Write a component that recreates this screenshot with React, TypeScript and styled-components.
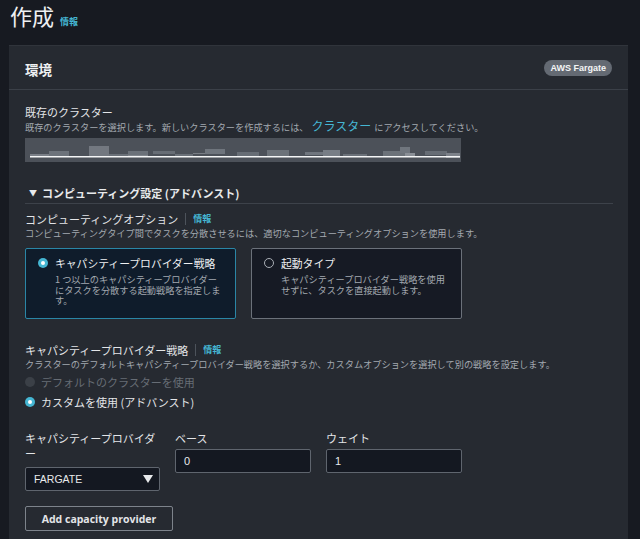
import React from "react";
import styled, { createGlobalStyle } from "styled-components";

const Global = createGlobalStyle`
  html, body { margin: 0; padding: 0; background: #171a21; }
  body {
    font-family: "Noto Sans CJK JP", "Noto Sans", "Liberation Sans", sans-serif;
    color: #e3e5e8;
  }
`;

const Page = styled.div`
  width: 640px;
  height: 539px;
  overflow: hidden;
  box-sizing: border-box;
  padding: 0 12px 0 9px;
  background: #171a21;
`;

const TitleRow = styled.div`
  display: flex;
  align-items: baseline;
  gap: 6px;
  height: 45px;
  box-sizing: border-box;
  padding-top: 1px;
  padding-left: 1px;
`;

const Title = styled.h1`
  margin: 0;
  font-size: 22px;
  line-height: 28px;
  font-weight: 400;
  color: #eef0f2;
`;

const InfoLink = styled.a<{ $size?: number }>`
  color: #45b6d3;
  font-weight: 700;
  font-size: ${(p) => p.$size ?? 9}px;
  text-decoration: none;
`;

const Panel = styled.section`
  background: #262a31;
  border-top: 1px solid #30343b;
  min-height: 600px;
`;

const PanelHeader = styled.header`
  display: flex;
  align-items: center;
  justify-content: space-between;
  height: 43px;
  padding: 0 16px;
  border-bottom: 1px solid #3b4048;
`;

const PanelTitle = styled.h2`
  margin: 3px 0 0;
  font-size: 13.5px;
  font-weight: 700;
  color: #eef0f2;
`;

const Badge = styled.span`
  background: #646a73;
  color: #f4f5f6;
  font-family: "Liberation Sans", "Noto Sans", sans-serif;
  font-size: 9px;
  font-weight: 700;
  line-height: 16px;
  padding: 0 6px;
  border-radius: 8px;
`;

const Content = styled.div`
  padding: 15px 15px 0 16px;
  display: flex;
  flex-direction: column;
`;

const Label = styled.div`
  display: flex;
  align-items: center;
  font-size: 11px;
  line-height: 14px;
  color: #e3e5e8;
`;

const Sep = styled.span`
  width: 1px;
  height: 12px;
  background: #4d535b;
  margin: 0 7px 0 7px;
`;

const Desc = styled.div`
  font-size: 9.2px;
  line-height: 14px;
  color: #a3a9b0;
  white-space: nowrap;
`;

const DescLink = styled.a`
  color: #45b6d3;
  font-size: 12px;
  text-decoration: none;
  margin: 0 3px;
`;

const Redacted = styled.div`
  width: 436px;
  height: 24px;
  margin-top: 4px;
  background: #4c5159;
`;

const Expander = styled.div`
  margin-top: 23px;
  display: flex;
  align-items: center;
  gap: 5px;
  padding-left: 4px;
  font-size: 11px;
  font-weight: 700;
  line-height: 16px;
  color: #e8eaec;
  padding-bottom: 2px;
  border-bottom: 1px solid #3d424a;
`;

const Caret = styled.span`
  font-size: 8px;
`;

const Section = styled.div<{ $top: number }>`
  margin-top: ${(p) => p.$top}px;
  display: flex;
  flex-direction: column;
`;

const Cards = styled.div`
  display: grid;
  grid-template-columns: 211px 211px;
  gap: 15px;
  margin-top: 8px;
`;

const Card = styled.div<{ $selected?: boolean }>`
  box-sizing: border-box;
  height: 71px;
  border: 1px solid ${(p) => (p.$selected ? "#2a86a6" : "#6b717a")};
  background: ${(p) => (p.$selected ? "#0f1c2b" : "#161a24")};
  border-radius: 2px;
  padding: 7px 13px 0 12px;
  display: flex;
  gap: 7px;
  align-items: flex-start;
`;

const Radio = styled.span<{ $state: "on" | "off" | "disabled" }>`
  flex: none;
  box-sizing: border-box;
  width: 10px;
  height: 10px;
  border-radius: 50%;
  margin-top: 2px;
  display: flex;
  align-items: center;
  justify-content: center;
  background: ${(p) =>
    p.$state === "on" ? "#45b6d3" : p.$state === "disabled" ? "#3b4047" : "transparent"};
  border: ${(p) => (p.$state === "off" ? "1px solid #a9aeb5" : "none")};
  &::after {
    content: "";
    display: ${(p) => (p.$state === "on" ? "block" : "none")};
    width: 4px;
    height: 4px;
    border-radius: 50%;
    background: #ffffff;
  }
`;

const CardBody = styled.div`
  display: flex;
  flex-direction: column;
  min-width: 0;
`;

const CardTitle = styled.div`
  font-size: 10.8px;
  line-height: 14px;
  color: #eef0f2;
  white-space: nowrap;
`;

const CardDesc = styled.div`
  margin-top: 4px;
  font-size: 9.2px;
  line-height: 10.6px;
  color: #a3a9b0;
  line-break: anywhere;
`;

const RadioList = styled.div`
  display: flex;
  flex-direction: column;
  gap: 4px;
  margin-top: 3px;
`;

const RadioRow = styled.label<{ $disabled?: boolean }>`
  display: flex;
  align-items: center;
  gap: 6px;
  font-size: 11px;
  line-height: 16px;
  color: ${(p) => (p.$disabled ? "#676d75" : "#e3e5e8")};
  & > span:first-child { margin-top: 0; }
`;

const Fields = styled.div`
  display: grid;
  grid-template-columns: 135px 136px 136px;
  column-gap: 15px;
  margin-top: 21px;
  align-items: start;
`;

const Field = styled.div`
  display: flex;
  flex-direction: column;
  gap: 3px;
`;

const FieldLabel = styled.div`
  font-size: 11px;
  line-height: 15px;
  color: #e3e5e8;
  line-break: anywhere;
`;

const Input = styled.div`
  box-sizing: border-box;
  height: 24px;
  border: 1px solid #5f656e;
  border-radius: 2px;
  background: #141821;
  padding: 0 8px;
  display: flex;
  align-items: center;
  font-family: "Liberation Sans", "Noto Sans", sans-serif;
  font-size: 11px;
  color: #e8eaec;
`;

const Select = styled(Input)`
  margin-top: 3px;
  justify-content: space-between;
  font-size: 10.5px;
  padding: 0 6px 0 8px;
`;

const SelectCaret = styled.svg`
  width: 10px;
  height: 8px;
`;

const Button = styled.button`
  align-self: flex-start;
  margin-top: 15px;
  box-sizing: border-box;
  width: 148px;
  height: 25px;
  background: transparent;
  border: 1px solid #7d838b;
  border-radius: 2px;
  color: #e3e5e8;
  font-family: "Open Sans", "Noto Sans", sans-serif;
  font-weight: 700;
  font-size: 10.5px;
  padding: 0;
`;

const blocks: [number, number, number, number, string][] = [
  [5, 16, 22, 2, "#7a7f87"],
  [24, 13, 20, 5, "#6d737b"],
  [64, 8, 20, 10, "#737880"],
  [84, 16, 22, 2, "#6a7078"],
  [103, 13, 20, 4, "#6b7179"],
  [103, 17, 20, 2, "#80858c"],
  [128, 13, 22, 3, "#676d75"],
  [150, 16, 18, 2, "#6a7078"],
  [168, 15, 18, 1, "#787d84"],
  [180, 11, 20, 5, "#6f757d"],
  [212, 14, 22, 4, "#676d75"],
  [242, 12, 22, 6, "#6c7279"],
  [280, 14, 22, 3, "#70767e"],
  [298, 12, 17, 6, "#787e86"],
  [318, 16, 24, 2, "#6a7078"],
  [358, 13, 22, 5, "#6c7279"],
  [375, 9, 10, 6, "#70767e"],
  [380, 15, 10, 3, "#8a8f96"],
  [400, 13, 22, 4, "#676d75"],
  [421, 15, 14, 5, "#7c8189"],
];

function RedactedField() {
  return (
    <Redacted>
      <svg width="436" height="24" viewBox="0 0 436 24">
        {blocks.map(([x, y, w, h, c], i) => (
          <rect key={i} x={x} y={y} width={w} height={h} fill={c} />
        ))}
        <rect x="5" y="18" width="430" height="1.5" fill="#f4f5f6" />
      </svg>
    </Redacted>
  );
}

export default function App() {
  return (
    <>
      <Global />
      <Page>
        <TitleRow>
          <Title>作成</Title>
          <InfoLink href="#">情報</InfoLink>
        </TitleRow>
        <Panel>
          <PanelHeader>
            <PanelTitle>環境</PanelTitle>
            <Badge>AWS Fargate</Badge>
          </PanelHeader>
          <Content>
            <Label>既存のクラスター</Label>
            <Desc>
              既存のクラスターを選択します。新しいクラスターを作成するには、
              <DescLink href="#">クラスター</DescLink>
              にアクセスしてください。
            </Desc>
            <RedactedField />

            <Expander>
              <Caret>▼</Caret>
              コンピューティング設定 (アドバンスト)
            </Expander>

            <Section $top={8}>
              <Label>
                コンピューティングオプション
                <Sep />
                <InfoLink href="#">情報</InfoLink>
              </Label>
              <Desc>
                コンピューティングタイプ間でタスクを分散させるには、適切なコンピューティングオプションを使用します。
              </Desc>
              <Cards>
                <Card $selected>
                  <Radio $state="on" />
                  <CardBody>
                    <CardTitle>キャパシティープロバイダー戦略</CardTitle>
                    <CardDesc>
                      1 つ以上のキャパシティープロバイダーにタスクを分散する起動戦略を指定します。
                    </CardDesc>
                  </CardBody>
                </Card>
                <Card>
                  <Radio $state="off" />
                  <CardBody>
                    <CardTitle>起動タイプ</CardTitle>
                    <CardDesc>
                      キャパシティープロバイダー戦略を使用せずに、タスクを直接起動します。
                    </CardDesc>
                  </CardBody>
                </Card>
              </Cards>
            </Section>

            <Section $top={24}>
              <Label>
                キャパシティープロバイダー戦略
                <Sep />
                <InfoLink href="#">情報</InfoLink>
              </Label>
              <Desc>
                クラスターのデフォルトキャパシティープロバイダー戦略を選択するか、カスタムオプションを選択して別の戦略を設定します。
              </Desc>
              <RadioList>
                <RadioRow $disabled>
                  <Radio $state="disabled" />
                  デフォルトのクラスターを使用
                </RadioRow>
                <RadioRow>
                  <Radio $state="on" />
                  カスタムを使用 (アドバンスト)
                </RadioRow>
              </RadioList>
            </Section>

            <Fields>
              <Field>
                <FieldLabel>キャパシティープロバイダー</FieldLabel>
                <Select>
                  FARGATE
                  <SelectCaret viewBox="0 0 10 8">
                    <path d="M0 0 H10 L5 8 Z" fill="#e8eaec" />
                  </SelectCaret>
                </Select>
              </Field>
              <Field>
                <FieldLabel>ベース</FieldLabel>
                <Input>0</Input>
              </Field>
              <Field>
                <FieldLabel>ウェイト</FieldLabel>
                <Input>1</Input>
              </Field>
            </Fields>

            <Button>Add capacity provider</Button>
          </Content>
        </Panel>
      </Page>
    </>
  );
}
